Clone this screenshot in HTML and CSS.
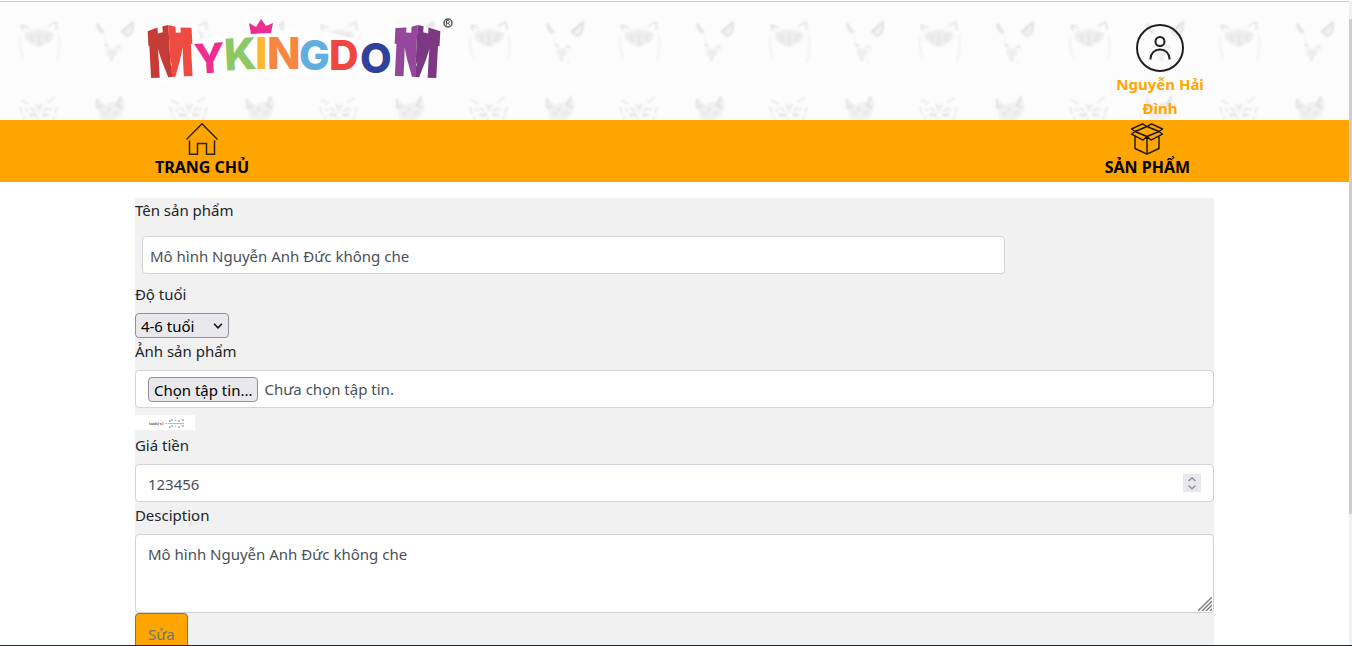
FILE: index.html
```html
<!DOCTYPE html>
<html lang="vi">
<head>
<meta charset="utf-8">
<meta name="viewport" content="width=device-width, initial-scale=1">
<title>MyKingdom - Sửa sản phẩm</title>
<link rel="stylesheet" href="styles.css">
</head>
<body>
<div class="frame">
  <div class="view">
    <header class="header">
      <svg class="header-pattern" aria-hidden="true">
        <defs>
          <filter id="soft"><feGaussianBlur stdDeviation="0.9"/></filter>
          <pattern id="animals" width="150" height="150" patternUnits="userSpaceOnUse">
            <g fill="none" stroke="#dadada" stroke-width="1.2" filter="url(#soft)">
              <path d="M21 25l8 3M21 25l2 6M56 22l-8 4M56 22l1 8" stroke="#d6d6d6"/>
              <path d="M20 36q-1 12 3 22M59 35q2 14-2 27" stroke="#ebebeb"/>
              <path d="M25 33q14-7 28 0q2 5-4 9l-8 4-8-1-8-6z" fill="#eeeeee" stroke="#f3f3f3"/>
              <path d="M29 35l5 2M45 37l5-3M30 39l4 2M44 40l5-1M39 34v10M36 45h6" stroke="#dcdcdc"/>
              <path d="M97 23l7 10M97 25q1 5 5 8" stroke="#d2d2d2"/>
              <path d="M133 22l-11 9M133 22q1 12-6 14l-5-4z" fill="#f2f2f2" stroke="#d6d6d6"/>
              <path d="M105 37q-1 6 2 9M119 46l2 5M118 60v5" stroke="#efefef"/>
              <path d="M107 49h9l1 4-5 6-5-5z" fill="#eeeeee" stroke="#f2f2f2"/>
              <path d="M105 45l4 1M116 47l4-1M110 59l3 1" stroke="#cccccc"/>
              <path d="M21 100l8 4M55 98l-8 4M20 107l2 7M57 107l-2 7" stroke="#dedede"/>
              <path d="M36 104l2 4M42 104l-2 4M39 108v4M30 108l5 3M48 108l-5 3M25 109l3 2M52 109l-4 1" stroke="#d9d9d9"/>
              <path d="M30 114h6v2h-6zM43 114h5v2h-5zM24 116l1 4M54 116l-1 4M38 117v3" stroke="#dadada"/>
              <path d="M97 99l8 7q7-4 11-3l5-7q4 9 2 14l-3 6-6 4H101z" fill="#f1f1f1" stroke="#efefef"/>
              <path d="M97 99v9l6-2M121 97l-4 8 5 3M102 113l5 1M113 114l5-2M109 108v3" stroke="#d4d4d4"/>
            </g>
          </pattern>
        </defs>
        <rect width="100%" height="100%" fill="#fcfcfc"/>
        <rect width="100%" height="100%" fill="url(#animals)"/>
      </svg>
      <div class="container header-row">
        <a class="logo" href="#" aria-label="MyKingdom">
          <svg width="320" height="84" viewBox="0 0 320 84">
            <defs>
              <linearGradient id="red"><stop offset=".5" stop-color="#c53b36"/><stop offset=".5" stop-color="#ee4b42"/></linearGradient>
              <linearGradient id="purple"><stop offset=".5" stop-color="#95489b"/><stop offset=".5" stop-color="#7c3883"/></linearGradient>
            </defs>
            <path d="M8 20L52 18 56 34 88 28 110 22 112 8h20l2 16 54 2 30 8 34-3 2-14 42 6-8 40-42-5-180 2-48 4z" fill="#fefefe" stroke="#fefefe" stroke-width="12" stroke-linejoin="round"/>
            <g class="logo-letters">
              <g transform="rotate(-3 30 44)">
                <text class="tower" x="7" y="65" fill="url(#red)">M</text>
                <path d="M9 18l10-3v6l5-1v-6l6-1v40L17 33H9z" fill="#c53b36"/>
                <path d="M30 13l7 2v6h5v-5l11 1v16h-8L30 53z" fill="#ee4b42"/>
              </g>
              <text x="54" y="61" fill="#ee2d91" transform="rotate(-3 70 46)">Y</text>
              <text x="84" y="58" font-size="44" fill="#8cc866" transform="rotate(-3 100 42)">K</text>
              <text x="115" y="57" font-size="44" fill="#fdb92e">I</text>
              <text x="127" y="57" font-size="44" fill="#f58741">N</text>
              <text x="159" y="58" fill="#62aee0">G</text>
              <text x="189" y="58" fill="#ee4640">D</text>
              <text x="220" y="61" fill="#30419a">O</text>
              <g transform="rotate(3 276 44)">
                <text class="tower" x="253" y="65" fill="url(#purple)">M</text>
                <path d="M254 17l11-1v5h5v-6l6-2v40l-13-20h-9z" fill="#95489b"/>
                <path d="M276 13l6 1v6l5 1v-6l12 3v15h-10l-13 20z" fill="#7c3883"/>
              </g>
            </g>
            <path d="M109 11l7 4 5-8 5 7 7-3-2 10-20 1z" fill="#ee2d91"/>
            <g fill="none" stroke="#555">
              <circle cx="308" cy="11" r="4" stroke-width="1.500"/>
              <path d="M306.500 13.500v-5h2q2 1.300 0 2.600h-2M308 11l2 2.500"/>
            </g>
          </svg>
        </a>
        <a class="user" href="#">
          <svg width="48" height="48" viewBox="0 0 48 48" fill="none" stroke="#231f20" stroke-width="2">
            <circle cx="24" cy="24" r="23"/>
            <circle cx="24" cy="17.500" r="4.500"/>
            <path d="M14.500 35.500v-1a9.500 9 0 0 1 19 0v1"/>
          </svg>
          <span>Nguyễn Hải Đình</span>
        </a>
      </div>
    </header>
    <nav class="nav">
      <div class="container nav-row">
        <a class="nav-item" href="#">
          <svg width="32" height="32" viewBox="0 0 32 32" fill="none" stroke="#2b2416" stroke-width="1.500">
            <path d="M.5 16.500L16 .8l15.500 15.700M3.500 17.500v13.700h8V20.500h9v10.700h8V17.500"/>
          </svg>
          <span>TRANG CHỦ</span>
        </a>
        <a class="nav-item" href="#">
          <svg width="34" height="32" viewBox="0 0 34 32" fill="none" stroke="#1a1405" stroke-width="1.400" stroke-linejoin="round">
            <path d="M5 8.500L17 3.500l12 5-12 5zM5 8.500L1.500 6 12.500.8 17 3.500 21.500.8 32.500 6 29 8.500l3.500 2.700L21 17l-4-3.500-4 3.500L1.500 11.200zM5 13.500v12L17 31.200l12-5.700v-12M17 13.500v17.700"/>
          </svg>
          <span>SẢN PHẨM</span>
        </a>
      </div>
    </nav>
    <main class="container">
      <form class="form">
        <label class="label" for="name">Tên sản phẩm</label>
        <input class="control control-name" id="name" type="text" value="Mô hình Nguyễn Anh Đức không che">
        <label class="label" for="age">Độ tuổi</label>
        <div class="select-wrap">
          <select class="select" id="age"><option>4-6 tuổi</option></select>
          <svg class="select-arrow" width="10" height="6" viewBox="0 0 10 6" fill="none" stroke="#111" stroke-width="1.600"><path d="M1 .8l4 4 4-4"/></svg>
        </div>
        <label class="label label-next" for="photo">Ảnh sản phẩm</label>
        <label class="control file" for="photo">
          <input class="file-input" id="photo" type="file">
          <span class="file-button">Chọn tập tin...</span>
          <span>Chưa chọn tập tin.</span>
        </label>
        <svg class="thumb" width="60" height="15" viewBox="0 0 60 15" role="img" aria-label="tanh(x)">
          <rect width="60" height="15" fill="#fff"/>
          <g font-size="5" fill="#111">
            <text x="14" y="10">tanh(x) =</text>
            <text x="34" y="7">eˣ − e⁻ˣ</text>
            <text x="34" y="13">eˣ + e⁻ˣ</text>
          </g>
          <path d="M33 8.500h16" stroke="#777" stroke-width=".5"/>
        </svg>
        <label class="label label-price" for="price">Giá tiền</label>
        <div class="overlay-wrap">
          <input class="control" id="price" type="number" value="123456">
          <svg class="spinner" width="18" height="18" viewBox="0 0 18 18" fill="none" stroke="#8f8f9d" stroke-width="1.500"><rect width="18" height="18" fill="#e9e9ed" stroke="none"/><path d="M5.500 7L9 3.700 12.500 7M5.500 11.500L9 14.800l3.500-3.300"/></svg>
        </div>
        <label class="label label-next" for="desc">Desciption</label>
        <div class="overlay-wrap">
          <textarea class="control textarea" id="desc">Mô hình Nguyễn Anh Đức không che</textarea>
          <svg class="grip" width="14" height="14" viewBox="0 0 14 14" stroke="#777" stroke-width="1.300"><path d="M0 14L14 0M4 14L14 4M8 14l6-6M12 14l2-2"/></svg>
        </div>
        <button class="submit" type="submit">Sửa</button>
      </form>
    </main>
  </div>
  <div class="scrollbar"><div class="scroll-thumb"></div></div>
</div>
</body>
</html>
```
FILE: styles.css
```css
* {
  box-sizing: border-box;
}

body {
  margin: 0;
  background: #fff;
  color: #212529;
  font: 15px/24px "Noto Sans", "Open Sans", sans-serif;
}

a {
  color: inherit;
  text-decoration: none;
}

svg {
  display: block;
}

.frame {
  display: flex;
  height: 100vh;
  overflow: hidden;
  padding-top: 1px;
  border-bottom: 1px solid #20262b;
}

.view {
  flex: 1;
  min-width: 0;
  border-top: 1px solid #ccc;
  overflow: hidden;
}

.scrollbar {
  width: 3px;
  padding-top: 18px;
  background: #f0f0f0;
}

.scroll-thumb {
  height: 79%;
  background: #cdcdcd;
}

.container {
  width: 80%;
  margin: 0 auto;
}

.header {
  position: relative;
  height: 118px;
}

.header-pattern {
  position: absolute;
  inset: -2px 0 0;
  width: 100%;
  height: 120px;
}

.header-row {
  position: relative;
  display: flex;
  justify-content: space-between;
  padding: 10px 0 0 5px;
}

.logo-letters {
  font-family: Inter, sans-serif;
  font-size: 41px;
  font-weight: 800;
}

.tower {
  font-size: 50px;
}

.user {
  display: flex;
  flex-direction: column;
  align-items: center;
  width: 108px;
  padding-top: 12px;
  color: #ffa500;
  font-weight: 700;
  text-align: center;
}

.user span {
  width: 100px;
}

.nav {
  background: #ffa500;
}

.nav-row {
  display: flex;
  justify-content: space-between;
  padding: 3px 24px 3px 20px;
}

.nav-item {
  display: flex;
  flex-direction: column;
  align-items: center;
  color: #000;
  font-size: 16px;
  font-weight: 700;
}

.form {
  display: flex;
  flex-direction: column;
  align-items: flex-start;
  margin-top: 16px;
  padding-bottom: 40px;
  background: #f1f1f1;
}

.label {
  margin-bottom: 7px;
}

.control {
  display: block;
  width: 100%;
  height: 38px;
  margin: 0;
  padding: 7px 12px 5px;
  border: 1px solid #ced4da;
  border-radius: 4px;
  background: #fff;
  color: #495057;
  font: inherit;
}

.control-name {
  width: 80%;
  margin: 7px 7px 8px;
  padding: 7px 7px 5px;
}

.select-wrap,
.overlay-wrap {
  position: relative;
}

.overlay-wrap {
  width: 100%;
}

.select {
  display: block;
  width: 94px;
  height: 25px;
  padding: 0 5px;
  border: 1px solid #8f8f9d;
  border-radius: 4px;
  background: #e9e9ed;
  color: #000;
  font: inherit;
  appearance: none;
}

.select-arrow {
  position: absolute;
  top: 10px;
  right: 6px;
  pointer-events: none;
}

.label-next {
  margin-top: 1px;
}

.file {
  display: flex;
  align-items: center;
  gap: 6px;
  padding: 6px 12px;
}

.file-input {
  position: absolute;
  width: 1px;
  height: 1px;
  opacity: 0;
}

.file-button {
  height: 25px;
  padding: 0 5px;
  border: 1px solid #8f8f9d;
  border-radius: 4px;
  background: #e9e9ed;
  color: #000;
}

.thumb {
  margin-top: 7px;
  font-family: "Liberation Serif", serif;
}

.label-price {
  margin-top: 3px;
}

input[type="number"] {
  appearance: textfield;
}

.spinner {
  position: absolute;
  top: 10px;
  right: 13px;
}

.textarea {
  height: 79px;
  resize: none;
}

.grip {
  position: absolute;
  right: 2px;
  bottom: 2px;
}

.submit {
  padding: 8px 12px;
  border: 1px solid #6c757d;
  border-radius: 4px;
  background: #ffa500;
  color: #6c757d;
  font: inherit;
}
```
